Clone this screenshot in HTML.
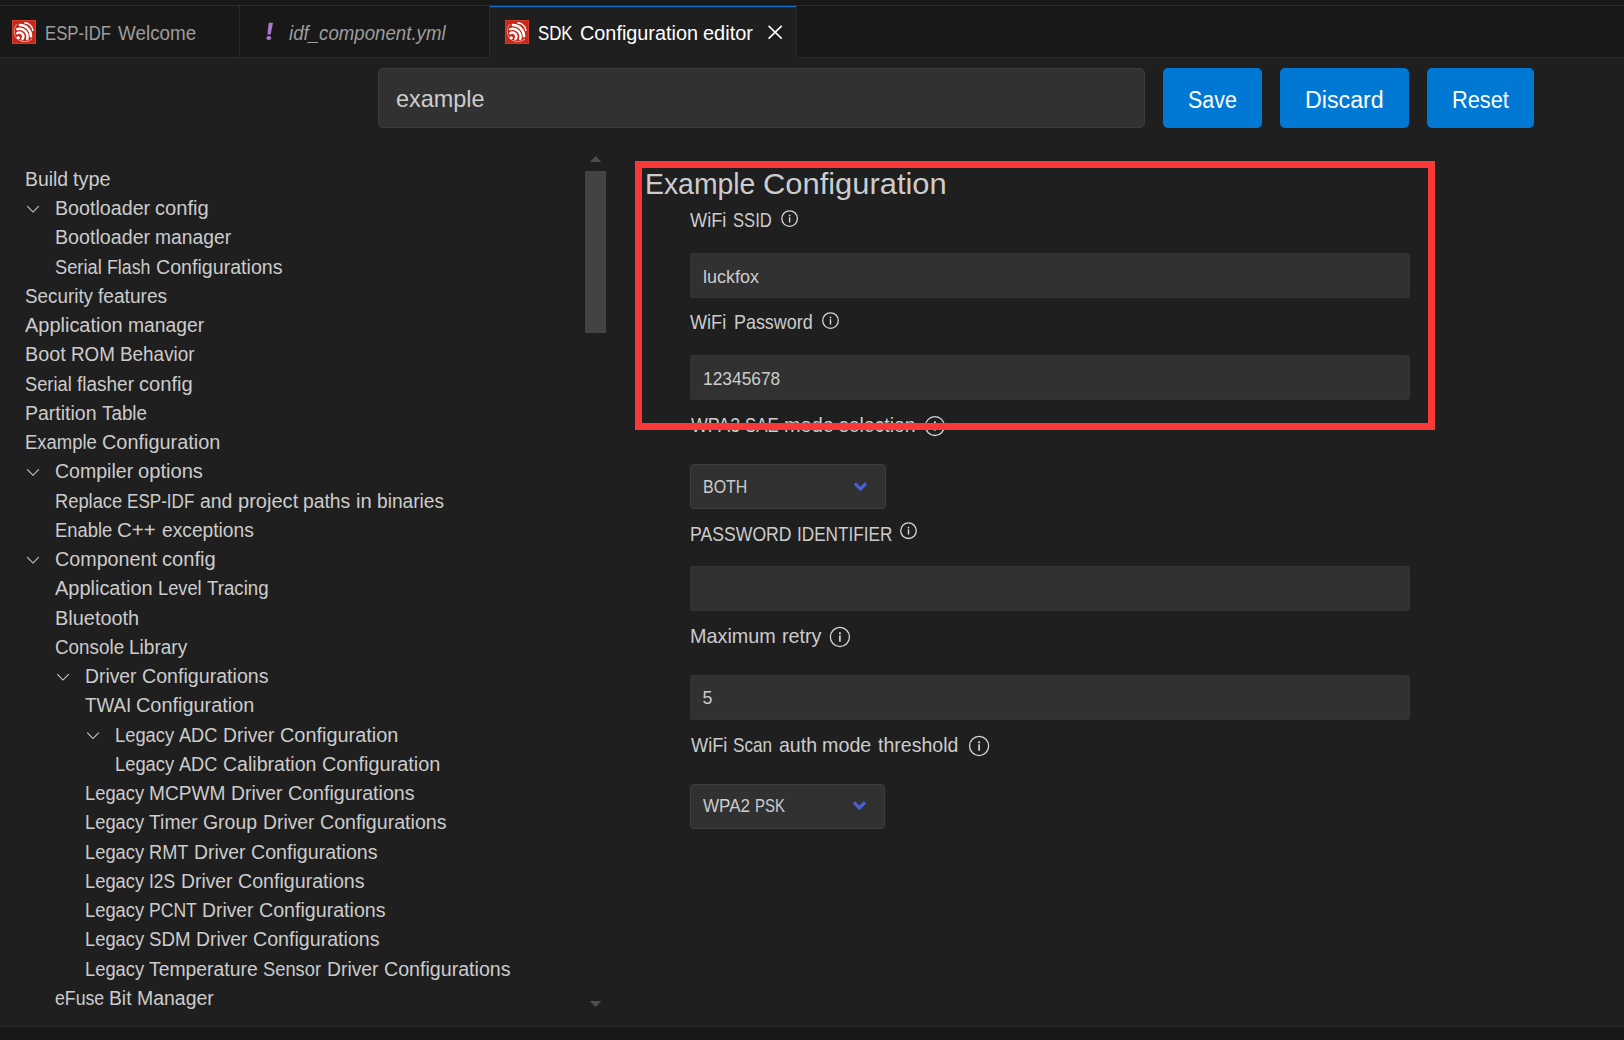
<!DOCTYPE html>
<html><head><meta charset="utf-8"><title>SDK Configuration editor</title>
<style>
html,body{margin:0;padding:0;width:1624px;height:1040px;overflow:hidden;background:#1f1f1f;font-family:"Liberation Sans",sans-serif;}
.a{position:absolute;}
.t{position:absolute;white-space:pre;line-height:1;transform-origin:0 0;font-family:"Liberation Sans",sans-serif;}
.box{position:absolute;box-sizing:border-box;}
.inp{position:absolute;box-sizing:border-box;background:#313131;border:1px solid #343434;border-radius:2.5px;}
.sel{position:absolute;box-sizing:border-box;background:#313131;border:1px solid #3e3e3e;border-radius:4px;}
.btn{position:absolute;box-sizing:border-box;background:#0078d4;border-radius:5px;}
</style></head><body>
<!-- top strip + tab bar -->
<div class="box" style="left:0;top:0;width:1624px;height:58px;background:#181818;border-bottom:1px solid #2b2b2b"></div>
<div class="box" style="left:0;top:5px;width:1624px;height:1px;background:#2b2b2b"></div>
<div class="box" style="left:239px;top:6px;width:1px;height:51px;background:#2b2b2b"></div>
<div class="box" style="left:489px;top:6px;width:1px;height:51px;background:#2b2b2b"></div>
<div class="box" style="left:490px;top:6px;width:306px;height:52px;background:#1f1f1f;border-top:1.5px solid #0078d4"></div>
<div class="box" style="left:796px;top:6px;width:1px;height:51px;background:#2b2b2b"></div>
<svg class="a" style="left:12px;top:20px" width="24" height="24" viewBox="0 0 24 24"><rect width="24" height="24" fill="#d8402f"/><rect x="0.8" y="0.8" width="22.4" height="22.4" fill="#c8281a"/><g fill="none" stroke="#ffffff" stroke-linecap="round"><path d="M5.20 13.20 A4.00 4.00 0 0 1 10.50 19.00" stroke-width="2.4"/><path d="M5.30 9.10 A7.99 7.99 0 0 1 15.20 19.00" stroke-width="2.5"/><path d="M7.90 5.10 A10.93 10.93 0 0 1 19.00 16.20" stroke-width="2.5"/><path d="M13.00 2.90 A8.69 8.69 0 0 1 20.90 10.30" stroke-width="1.6"/><path d="M4.50 4.30 A11.98 11.98 0 0 0 4.40 18.00" stroke-width="0.8" opacity="0.6"/><path d="M4.40 18.00 A10.82 10.82 0 0 0 19.80 19.20" stroke-width="0.9" opacity="0.65"/></g><circle cx="6.3" cy="17.8" r="1.55" fill="#ffffff"/></svg>
<svg class="a" style="left:505px;top:20px" width="24" height="24" viewBox="0 0 24 24"><rect width="24" height="24" fill="#d8402f"/><rect x="0.8" y="0.8" width="22.4" height="22.4" fill="#c8281a"/><g fill="none" stroke="#ffffff" stroke-linecap="round"><path d="M5.20 13.20 A4.00 4.00 0 0 1 10.50 19.00" stroke-width="2.4"/><path d="M5.30 9.10 A7.99 7.99 0 0 1 15.20 19.00" stroke-width="2.5"/><path d="M7.90 5.10 A10.93 10.93 0 0 1 19.00 16.20" stroke-width="2.5"/><path d="M13.00 2.90 A8.69 8.69 0 0 1 20.90 10.30" stroke-width="1.6"/><path d="M4.50 4.30 A11.98 11.98 0 0 0 4.40 18.00" stroke-width="0.8" opacity="0.6"/><path d="M4.40 18.00 A10.82 10.82 0 0 0 19.80 19.20" stroke-width="0.9" opacity="0.65"/></g><circle cx="6.3" cy="17.8" r="1.55" fill="#ffffff"/></svg>
<svg class="a" style="left:262px;top:20px" width="16" height="24" viewBox="262 20 16 24"><path d="M268.7 22.8 L273.0 22.8 L270.7 34.4 L267.4 34.4 Z" fill="#a977d0"/><ellipse cx="268.8" cy="38.1" rx="2.5" ry="2.0" fill="#a977d0"/></svg>
<svg class="a" style="left:767px;top:24px" width="17" height="17" viewBox="767 24 17 17"><path d="M768.6 25.9 L781.7 38.6 M781.7 25.9 L768.6 38.6" stroke="#ffffff" stroke-width="1.55" fill="none"/></svg>
<!-- search + buttons -->
<div class="inp" style="left:378px;top:68px;width:767px;height:60px;border-color:#3c3c3c;border-radius:5px"></div>
<div class="btn" style="left:1163px;top:68px;width:99px;height:60px"></div>
<div class="btn" style="left:1280px;top:68px;width:129px;height:60px"></div>
<div class="btn" style="left:1427px;top:68px;width:107px;height:60px"></div>
<!-- scrollbar -->
<div class="box" style="left:585px;top:171px;width:21px;height:162px;background:#434343"></div>
<svg class="a" style="left:589px;top:155px" width="14" height="8" viewBox="0 0 14 8"><path d="M0.8 7 L6.6 1 L12.4 7 Z" fill="#4d4d4d"/></svg>
<svg class="a" style="left:589px;top:1000px" width="14" height="8" viewBox="0 0 14 8"><path d="M0.8 1 L6.6 7 L12.4 1 Z" fill="#4d4d4d"/></svg>
<!-- form controls -->
<div class="inp" style="left:690px;top:253px;width:720px;height:45px"></div>
<div class="inp" style="left:690px;top:355px;width:720px;height:45px"></div>
<div class="sel" style="left:690px;top:464px;width:196px;height:45px"></div>
<div class="inp" style="left:690px;top:566px;width:720px;height:45px"></div>
<div class="inp" style="left:690px;top:675px;width:720px;height:45px"></div>
<div class="sel" style="left:690px;top:784px;width:195px;height:45px"></div>
<svg class="a" style="left:848px;top:476px" width="24" height="24" viewBox="0 0 24 24"><g transform="translate(12.46 12.90)"><path d="M-5.55 -5.6 L0 0 L5.55 -5.6" fill="none" stroke="#4960d0" stroke-width="3.3" stroke-linecap="butt" stroke-linejoin="miter"/></g></svg>
<svg class="a" style="left:847px;top:795px" width="24" height="24" viewBox="0 0 24 24"><g transform="translate(12.45 12.90)"><path d="M-5.55 -5.6 L0 0 L5.55 -5.6" fill="none" stroke="#4960d0" stroke-width="3.3" stroke-linecap="butt" stroke-linejoin="miter"/></g></svg>
<svg class="a" style="left:776px;top:205px" width="26" height="26" viewBox="0 0 26 26"><g transform="translate(13.60 13.60)"><circle cx="0" cy="0" r="7.80" fill="none" stroke="#d6d6d6" stroke-width="1.3"/><rect x="-0.68" y="-1.36" width="1.36" height="5.27" fill="#dcdcdc"/><rect x="-0.77" y="-3.91" width="1.53" height="1.61" fill="#dcdcdc"/></g></svg>
<svg class="a" style="left:817px;top:307px" width="26" height="26" viewBox="0 0 26 26"><g transform="translate(13.50 13.60)"><circle cx="0" cy="0" r="7.80" fill="none" stroke="#d6d6d6" stroke-width="1.3"/><rect x="-0.68" y="-1.36" width="1.36" height="5.27" fill="#dcdcdc"/><rect x="-0.77" y="-3.91" width="1.53" height="1.61" fill="#dcdcdc"/></g></svg>
<svg class="a" style="left:921px;top:413px" width="26" height="26" viewBox="0 0 26 26"><g transform="translate(13.90 13.05)"><circle cx="0" cy="0" r="9.45" fill="none" stroke="#d6d6d6" stroke-width="1.3"/><rect x="-0.81" y="-1.62" width="1.62" height="6.29" fill="#dcdcdc"/><rect x="-0.91" y="-4.67" width="1.83" height="1.93" fill="#dcdcdc"/></g></svg>
<svg class="a" style="left:895px;top:517px" width="26" height="26" viewBox="0 0 26 26"><g transform="translate(13.50 13.70)"><circle cx="0" cy="0" r="7.80" fill="none" stroke="#d6d6d6" stroke-width="1.3"/><rect x="-0.68" y="-1.36" width="1.36" height="5.27" fill="#dcdcdc"/><rect x="-0.77" y="-3.91" width="1.53" height="1.61" fill="#dcdcdc"/></g></svg>
<svg class="a" style="left:826px;top:624px" width="26" height="26" viewBox="0 0 26 26"><g transform="translate(13.90 13.00)"><circle cx="0" cy="0" r="9.55" fill="none" stroke="#d6d6d6" stroke-width="1.3"/><rect x="-0.82" y="-1.64" width="1.64" height="6.35" fill="#dcdcdc"/><rect x="-0.92" y="-4.71" width="1.84" height="1.95" fill="#dcdcdc"/></g></svg>
<svg class="a" style="left:966px;top:733px" width="26" height="26" viewBox="0 0 26 26"><g transform="translate(13.10 13.00)"><circle cx="0" cy="0" r="9.55" fill="none" stroke="#d6d6d6" stroke-width="1.3"/><rect x="-0.82" y="-1.64" width="1.64" height="6.35" fill="#dcdcdc"/><rect x="-0.92" y="-4.71" width="1.84" height="1.95" fill="#dcdcdc"/></g></svg>
<svg class="a" style="left:24px;top:200px" width="18" height="18" viewBox="0 0 18 18"><g transform="translate(9.00 9.15)"><path d="M-5.8 -3.0 L0 2.9 L5.8 -3.0" fill="none" stroke="#c8c8c8" stroke-width="1.15"/></g></svg><svg class="a" style="left:24px;top:463px" width="18" height="18" viewBox="0 0 18 18"><g transform="translate(9.00 9.40)"><path d="M-5.8 -3.0 L0 2.9 L5.8 -3.0" fill="none" stroke="#c8c8c8" stroke-width="1.15"/></g></svg><svg class="a" style="left:24px;top:551px" width="18" height="18" viewBox="0 0 18 18"><g transform="translate(9.00 9.15)"><path d="M-5.8 -3.0 L0 2.9 L5.8 -3.0" fill="none" stroke="#c8c8c8" stroke-width="1.15"/></g></svg><svg class="a" style="left:54px;top:668px" width="18" height="18" viewBox="0 0 18 18"><g transform="translate(9.00 9.15)"><path d="M-5.8 -3.0 L0 2.9 L5.8 -3.0" fill="none" stroke="#c8c8c8" stroke-width="1.15"/></g></svg><svg class="a" style="left:84px;top:726px" width="18" height="18" viewBox="0 0 18 18"><g transform="translate(9.00 9.65)"><path d="M-5.8 -3.0 L0 2.9 L5.8 -3.0" fill="none" stroke="#c8c8c8" stroke-width="1.15"/></g></svg>
<span class="t" style="left:24.80px;top:169.81px;font-size:19.6px;transform:scaleX(0.9891);color:#cccccc">Build</span>
<span class="t" style="left:73.25px;top:169.81px;font-size:19.6px;transform:scaleX(1.0152);color:#cccccc">type</span>
<span class="t" style="left:54.90px;top:198.81px;font-size:19.6px;transform:scaleX(1.0039);color:#cccccc">Bootloader</span>
<span class="t" style="left:155.39px;top:198.81px;font-size:19.6px;transform:scaleX(1.0276);color:#cccccc">config</span>
<span class="t" style="left:54.90px;top:227.81px;font-size:19.6px;transform:scaleX(1.0039);color:#cccccc">Bootloader</span>
<span class="t" style="left:155.39px;top:227.81px;font-size:19.6px;transform:scaleX(0.9835);color:#cccccc">manager</span>
<span class="t" style="left:54.90px;top:257.81px;font-size:19.6px;transform:scaleX(0.9320);color:#cccccc">Serial</span>
<span class="t" style="left:106.94px;top:257.81px;font-size:19.6px;transform:scaleX(0.9066);color:#cccccc">Flash</span>
<span class="t" style="left:155.73px;top:257.81px;font-size:19.6px;transform:scaleX(1.0017);color:#cccccc">Configurations</span>
<span class="t" style="left:24.80px;top:286.81px;font-size:19.6px;transform:scaleX(0.9611);color:#cccccc">Security</span>
<span class="t" style="left:98.17px;top:286.81px;font-size:19.6px;transform:scaleX(0.9758);color:#cccccc">features</span>
<span class="t" style="left:24.80px;top:315.81px;font-size:19.6px;transform:scaleX(1.0187);color:#cccccc">Application</span>
<span class="t" style="left:127.79px;top:315.81px;font-size:19.6px;transform:scaleX(0.9835);color:#cccccc">manager</span>
<span class="t" style="left:24.80px;top:344.81px;font-size:19.6px;transform:scaleX(1.0081);color:#cccccc">Boot</span>
<span class="t" style="left:70.78px;top:344.81px;font-size:19.6px;transform:scaleX(0.9599);color:#cccccc">ROM</span>
<span class="t" style="left:120.01px;top:344.81px;font-size:19.6px;transform:scaleX(0.9643);color:#cccccc">Behavior</span>
<span class="t" style="left:24.80px;top:374.81px;font-size:19.6px;transform:scaleX(0.9320);color:#cccccc">Serial</span>
<span class="t" style="left:76.84px;top:374.81px;font-size:19.6px;transform:scaleX(0.9694);color:#cccccc">flasher</span>
<span class="t" style="left:139.20px;top:374.81px;font-size:19.6px;transform:scaleX(1.0276);color:#cccccc">config</span>
<span class="t" style="left:24.80px;top:403.81px;font-size:19.6px;transform:scaleX(0.9953);color:#cccccc">Partition</span>
<span class="t" style="left:101.70px;top:403.81px;font-size:19.6px;transform:scaleX(0.9607);color:#cccccc">Table</span>
<span class="t" style="left:24.80px;top:432.81px;font-size:19.6px;transform:scaleX(0.9430);color:#cccccc">Example</span>
<span class="t" style="left:102.03px;top:432.81px;font-size:19.6px;transform:scaleX(1.0149);color:#cccccc">Configuration</span>
<span class="t" style="left:54.90px;top:461.81px;font-size:19.6px;transform:scaleX(0.9968);color:#cccccc">Compiler</span>
<span class="t" style="left:138.39px;top:461.81px;font-size:19.6px;transform:scaleX(1.0277);color:#cccccc">options</span>
<span class="t" style="left:54.90px;top:491.81px;font-size:19.6px;transform:scaleX(0.9345);color:#cccccc">Replace</span>
<span class="t" style="left:127.43px;top:491.81px;font-size:19.6px;transform:scaleX(0.8709);color:#cccccc">ESP-IDF</span>
<span class="t" style="left:200.08px;top:491.81px;font-size:19.6px;transform:scaleX(0.9908);color:#cccccc">and</span>
<span class="t" style="left:237.83px;top:491.81px;font-size:19.6px;transform:scaleX(1.0237);color:#cccccc">project</span>
<span class="t" style="left:303.37px;top:491.81px;font-size:19.6px;transform:scaleX(0.9864);color:#cccccc">paths</span>
<span class="t" style="left:356.00px;top:491.81px;font-size:19.6px;transform:scaleX(1.0310);color:#cccccc">in</span>
<span class="t" style="left:377.08px;top:491.81px;font-size:19.6px;transform:scaleX(0.9777);color:#cccccc">binaries</span>
<span class="t" style="left:54.90px;top:520.81px;font-size:19.6px;transform:scaleX(0.9372);color:#cccccc">Enable</span>
<span class="t" style="left:117.43px;top:520.81px;font-size:19.6px;transform:scaleX(1.0460);color:#cccccc">C++</span>
<span class="t" style="left:161.52px;top:520.81px;font-size:19.6px;transform:scaleX(0.9805);color:#cccccc">exceptions</span>
<span class="t" style="left:54.90px;top:549.81px;font-size:19.6px;transform:scaleX(1.0067);color:#cccccc">Component</span>
<span class="t" style="left:162.24px;top:549.81px;font-size:19.6px;transform:scaleX(1.0276);color:#cccccc">config</span>
<span class="t" style="left:54.90px;top:578.81px;font-size:19.6px;transform:scaleX(1.0187);color:#cccccc">Application</span>
<span class="t" style="left:157.89px;top:578.81px;font-size:19.6px;transform:scaleX(0.9315);color:#cccccc">Level</span>
<span class="t" style="left:206.87px;top:578.81px;font-size:19.6px;transform:scaleX(0.9535);color:#cccccc">Tracing</span>
<span class="t" style="left:54.90px;top:608.81px;font-size:19.6px;transform:scaleX(1.0169);color:#cccccc">Bluetooth</span>
<span class="t" style="left:54.90px;top:637.81px;font-size:19.6px;transform:scaleX(0.9617);color:#cccccc">Console</span>
<span class="t" style="left:129.38px;top:637.81px;font-size:19.6px;transform:scaleX(0.9713);color:#cccccc">Library</span>
<span class="t" style="left:84.90px;top:666.81px;font-size:19.6px;transform:scaleX(0.9855);color:#cccccc">Driver</span>
<span class="t" style="left:141.73px;top:666.81px;font-size:19.6px;transform:scaleX(1.0017);color:#cccccc">Configurations</span>
<span class="t" style="left:84.90px;top:695.81px;font-size:19.6px;transform:scaleX(0.9583);color:#cccccc">TWAI</span>
<span class="t" style="left:136.48px;top:695.81px;font-size:19.6px;transform:scaleX(1.0149);color:#cccccc">Configuration</span>
<span class="t" style="left:114.90px;top:725.81px;font-size:19.6px;transform:scaleX(0.9355);color:#cccccc">Legacy</span>
<span class="t" style="left:179.35px;top:725.81px;font-size:19.6px;transform:scaleX(0.9263);color:#cccccc">ADC</span>
<span class="t" style="left:223.02px;top:725.81px;font-size:19.6px;transform:scaleX(0.9855);color:#cccccc">Driver</span>
<span class="t" style="left:279.85px;top:725.81px;font-size:19.6px;transform:scaleX(1.0149);color:#cccccc">Configuration</span>
<span class="t" style="left:114.90px;top:754.81px;font-size:19.6px;transform:scaleX(0.9355);color:#cccccc">Legacy</span>
<span class="t" style="left:179.35px;top:754.81px;font-size:19.6px;transform:scaleX(0.9263);color:#cccccc">ADC</span>
<span class="t" style="left:223.02px;top:754.81px;font-size:19.6px;transform:scaleX(0.9969);color:#cccccc">Calibration</span>
<span class="t" style="left:321.74px;top:754.81px;font-size:19.6px;transform:scaleX(1.0149);color:#cccccc">Configuration</span>
<span class="t" style="left:84.90px;top:783.81px;font-size:19.6px;transform:scaleX(0.9355);color:#cccccc">Legacy</span>
<span class="t" style="left:149.35px;top:783.81px;font-size:19.6px;transform:scaleX(0.9733);color:#cccccc">MCPWM</span>
<span class="t" style="left:230.96px;top:783.81px;font-size:19.6px;transform:scaleX(0.9855);color:#cccccc">Driver</span>
<span class="t" style="left:287.79px;top:783.81px;font-size:19.6px;transform:scaleX(1.0017);color:#cccccc">Configurations</span>
<span class="t" style="left:84.90px;top:812.81px;font-size:19.6px;transform:scaleX(0.9355);color:#cccccc">Legacy</span>
<span class="t" style="left:149.35px;top:812.81px;font-size:19.6px;transform:scaleX(0.9866);color:#cccccc">Timer</span>
<span class="t" style="left:203.38px;top:812.81px;font-size:19.6px;transform:scaleX(0.9922);color:#cccccc">Group</span>
<span class="t" style="left:262.76px;top:812.81px;font-size:19.6px;transform:scaleX(0.9855);color:#cccccc">Driver</span>
<span class="t" style="left:319.60px;top:812.81px;font-size:19.6px;transform:scaleX(1.0017);color:#cccccc">Configurations</span>
<span class="t" style="left:84.90px;top:842.81px;font-size:19.6px;transform:scaleX(0.9355);color:#cccccc">Legacy</span>
<span class="t" style="left:149.35px;top:842.81px;font-size:19.6px;transform:scaleX(0.9281);color:#cccccc">RMT</span>
<span class="t" style="left:194.09px;top:842.81px;font-size:19.6px;transform:scaleX(0.9855);color:#cccccc">Driver</span>
<span class="t" style="left:250.93px;top:842.81px;font-size:19.6px;transform:scaleX(1.0017);color:#cccccc">Configurations</span>
<span class="t" style="left:84.90px;top:871.81px;font-size:19.6px;transform:scaleX(0.9355);color:#cccccc">Legacy</span>
<span class="t" style="left:149.35px;top:871.81px;font-size:19.6px;transform:scaleX(0.8857);color:#cccccc">I2S</span>
<span class="t" style="left:180.75px;top:871.81px;font-size:19.6px;transform:scaleX(0.9855);color:#cccccc">Driver</span>
<span class="t" style="left:237.59px;top:871.81px;font-size:19.6px;transform:scaleX(1.0017);color:#cccccc">Configurations</span>
<span class="t" style="left:84.90px;top:900.81px;font-size:19.6px;transform:scaleX(0.9355);color:#cccccc">Legacy</span>
<span class="t" style="left:149.35px;top:900.81px;font-size:19.6px;transform:scaleX(0.8960);color:#cccccc">PCNT</span>
<span class="t" style="left:202.49px;top:900.81px;font-size:19.6px;transform:scaleX(0.9855);color:#cccccc">Driver</span>
<span class="t" style="left:259.32px;top:900.81px;font-size:19.6px;transform:scaleX(1.0017);color:#cccccc">Configurations</span>
<span class="t" style="left:84.90px;top:929.81px;font-size:19.6px;transform:scaleX(0.9355);color:#cccccc">Legacy</span>
<span class="t" style="left:149.35px;top:929.81px;font-size:19.6px;transform:scaleX(0.9540);color:#cccccc">SDM</span>
<span class="t" style="left:196.23px;top:929.81px;font-size:19.6px;transform:scaleX(0.9855);color:#cccccc">Driver</span>
<span class="t" style="left:253.07px;top:929.81px;font-size:19.6px;transform:scaleX(1.0017);color:#cccccc">Configurations</span>
<span class="t" style="left:84.90px;top:959.81px;font-size:19.6px;transform:scaleX(0.9355);color:#cccccc">Legacy</span>
<span class="t" style="left:149.35px;top:959.81px;font-size:19.6px;transform:scaleX(0.9880);color:#cccccc">Temperature</span>
<span class="t" style="left:263.37px;top:959.81px;font-size:19.6px;transform:scaleX(0.9349);color:#cccccc">Sensor</span>
<span class="t" style="left:326.77px;top:959.81px;font-size:19.6px;transform:scaleX(0.9855);color:#cccccc">Driver</span>
<span class="t" style="left:383.60px;top:959.81px;font-size:19.6px;transform:scaleX(1.0017);color:#cccccc">Configurations</span>
<span class="t" style="left:54.90px;top:988.81px;font-size:19.6px;transform:scaleX(0.9032);color:#cccccc">eFuse</span>
<span class="t" style="left:109.44px;top:988.81px;font-size:19.6px;transform:scaleX(0.9840);color:#cccccc">Bit</span>
<span class="t" style="left:137.29px;top:988.81px;font-size:19.6px;transform:scaleX(0.9931);color:#cccccc">Manager</span>
<span class="t" style="left:44.90px;top:24.29px;font-size:19.5px;transform:scaleX(0.8572);color:#9d9d9d">ESP-IDF</span>
<span class="t" style="left:118.21px;top:24.29px;font-size:19.5px;transform:scaleX(0.9669);color:#9d9d9d">Welcome</span>
<span class="t" style="left:289.02px;top:24.29px;font-size:19.5px;transform:scaleX(0.9571);color:#9d9d9d;font-style:italic">idf_component.yml</span>
<span class="t" style="left:538.21px;top:24.29px;font-size:19.5px;transform:scaleX(0.8626);color:#ffffff">SDK</span>
<span class="t" style="left:579.70px;top:24.29px;font-size:19.5px;transform:scaleX(1.0172);color:#ffffff">Configuration</span>
<span class="t" style="left:702.53px;top:24.29px;font-size:19.5px;transform:scaleX(1.0238);color:#ffffff">editor</span>
<span class="t" style="left:396.03px;top:88.39px;font-size:23.4px;transform:scaleX(1.0018);color:#cccccc">example</span>
<span class="t" style="left:1188.20px;top:89.28px;font-size:23.3px;transform:scaleX(0.9204);color:#ffffff">Save</span>
<span class="t" style="left:1305.00px;top:89.28px;font-size:23.3px;transform:scaleX(0.9966);color:#ffffff">Discard</span>
<span class="t" style="left:1451.60px;top:89.28px;font-size:23.3px;transform:scaleX(0.9346);color:#ffffff">Reset</span>
<span class="t" style="left:645.32px;top:170.45px;font-size:29px;transform:scaleX(0.9781);color:#cccccc">Example</span>
<span class="t" style="left:763.10px;top:170.45px;font-size:29px;transform:scaleX(1.0651);color:#cccccc">Configuration</span>
<span class="t" style="left:690.04px;top:210.94px;font-size:19.8px;transform:scaleX(0.9189);color:#cccccc">WiFi</span>
<span class="t" style="left:733.04px;top:210.94px;font-size:19.8px;transform:scaleX(0.8395);color:#cccccc">SSID</span>
<span class="t" style="left:690.38px;top:312.84px;font-size:19.8px;transform:scaleX(0.9149);color:#cccccc">WiFi</span>
<span class="t" style="left:734.20px;top:312.84px;font-size:19.8px;transform:scaleX(0.9051);color:#cccccc">Password</span>
<span class="t" style="left:691.40px;top:416.44px;font-size:19.8px;transform:scaleX(0.9005);color:#cccccc">WPA3</span>
<span class="t" style="left:745.20px;top:416.44px;font-size:19.8px;transform:scaleX(0.8522);color:#cccccc">SAE</span>
<span class="t" style="left:784.00px;top:416.44px;font-size:19.8px;transform:scaleX(1.0064);color:#cccccc">mode</span>
<span class="t" style="left:839.21px;top:416.44px;font-size:19.8px;transform:scaleX(0.9815);color:#cccccc">selection</span>
<span class="t" style="left:689.90px;top:525.14px;font-size:19.8px;transform:scaleX(0.8914);color:#cccccc">PASSWORD</span>
<span class="t" style="left:797.00px;top:525.14px;font-size:19.8px;transform:scaleX(0.8678);color:#cccccc">IDENTIFIER</span>
<span class="t" style="left:689.75px;top:627.29px;font-size:19.8px;transform:scaleX(1.0013);color:#cccccc">Maximum</span>
<span class="t" style="left:781.50px;top:627.29px;font-size:19.8px;transform:scaleX(0.9974);color:#cccccc">retry</span>
<span class="t" style="left:690.55px;top:736.04px;font-size:19.8px;transform:scaleX(0.9209);color:#cccccc">WiFi</span>
<span class="t" style="left:733.21px;top:736.04px;font-size:19.8px;transform:scaleX(0.8671);color:#cccccc">Scan</span>
<span class="t" style="left:778.86px;top:736.04px;font-size:19.8px;transform:scaleX(0.9882);color:#cccccc">auth</span>
<span class="t" style="left:821.90px;top:736.04px;font-size:19.8px;transform:scaleX(0.9965);color:#cccccc">mode</span>
<span class="t" style="left:878.01px;top:736.04px;font-size:19.8px;transform:scaleX(0.9873);color:#cccccc">threshold</span>
<span class="t" style="left:703.20px;top:268.83px;font-size:17.8px;transform:scaleX(1.0137);color:#cccccc">luckfox</span>
<span class="t" style="left:703.00px;top:371.03px;font-size:17.8px;transform:scaleX(0.9769);color:#cccccc">12345678</span>
<span class="t" style="left:702.40px;top:689.93px;font-size:17.8px;transform:scaleX(1.0000);color:#cccccc">5</span>
<span class="t" style="left:702.90px;top:478.83px;font-size:17.8px;transform:scaleX(0.8989);color:#cccccc">BOTH</span>
<span class="t" style="left:703.16px;top:797.53px;font-size:17.8px;transform:scaleX(0.9601);color:#cccccc">WPA2</span>
<span class="t" style="left:754.90px;top:797.53px;font-size:17.8px;transform:scaleX(0.8414);color:#cccccc">PSK</span>
<!-- red highlight box (drawn over content) -->
<div class="box" style="left:635px;top:161px;width:800px;height:269px;border:7px solid #fb3838"></div>
<!-- bottom -->
<div class="box" style="left:0;top:1026px;width:1624px;height:14px;background:#181818;border-top:1px solid #2b2b2b"></div>
</body></html>
